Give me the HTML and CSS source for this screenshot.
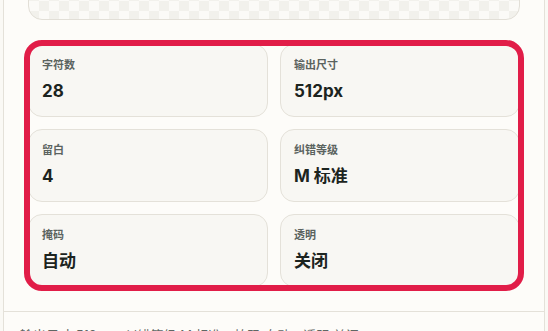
FILE: index.html
```html
<!DOCTYPE html>
<html lang="zh-CN">
<head>
    <meta charset="UTF-8">
    <meta name="viewport" content="width=device-width, initial-scale=1.0">
    <title>二维码参数</title>
    <link rel="stylesheet" href="styles.css">
</head>
<body>
    <div class="card">
        <div class="card-body">
            <div class="preview"></div>
            <div class="stats">
                <div class="stat"><span class="label">字符数</span><span class="value">28</span></div>
                <div class="stat"><span class="label">输出尺寸</span><span class="value">512px</span></div>
                <div class="stat"><span class="label">留白</span><span class="value">4</span></div>
                <div class="stat"><span class="label">纠错等级</span><span class="value">M 标准</span></div>
                <div class="stat"><span class="label">掩码</span><span class="value">自动</span></div>
                <div class="stat"><span class="label">透明</span><span class="value">关闭</span></div>
            </div>
        </div>
        <div class="card-foot">输出尺寸 512px，纠错等级 M 标准，掩码 自动，透明 关闭</div>
    </div>
</body>
</html>
```

FILE: styles.css
```css
*, *:before, *:after {box-sizing: border-box;}
* {margin:0;padding:0;}
html, body {background-color: #faf9f5;color: #1c2420;font-family: 'Inter', 'Noto Sans CJK SC', sans-serif;}
body {padding: 0 3px;}
.card {margin-top: -245px;background-color: #fdfcf9;border: 1px solid #e4e1d9;}
.card-body {display: flex;flex-direction: column;gap: 24px;padding: 24px;}
.preview {height: 240px;border: 1px solid #e2dfd7;border-radius: 14px;background-color: #fbfaf7;background-image: conic-gradient(#f2f1ec 25%, transparent 0 50%, #f2f1ec 0 75%, transparent 0);background-size: 20px 20px;}
.stats {display: grid;grid-template-columns: 1fr 1fr;gap: 12px;border-radius: 14px;outline: 6px solid #e11d48;outline-offset: -2px;}
.stat {display: flex;flex-direction: column;gap: 6px;padding: 12px 13px 13px;background-color: #f8f7f3;border: 1px solid #e4e1d9;border-radius: 14px;}
.label {font-size: 11px;line-height: 16px;font-weight: 600;color: #5b635f;}
.value {font-size: 17px;line-height: 24px;font-weight: 700;color: #1c2420;}
.card-foot {border-top: 1px solid #e4e1d9;padding: 13px 16px;font-size: 13px;line-height: 20px;color: #5f6663;}
```
